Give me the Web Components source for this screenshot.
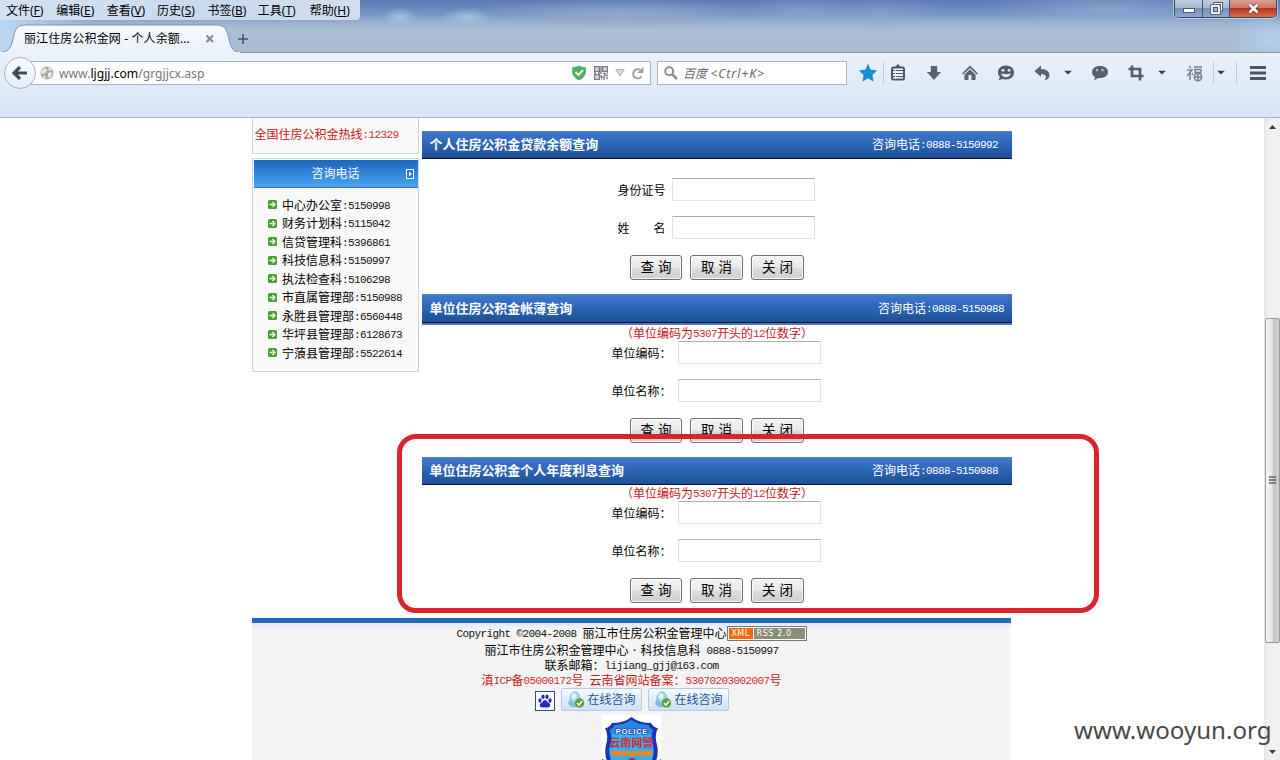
<!DOCTYPE html>
<html lang="zh-CN">
<head>
<meta charset="utf-8">
<title>丽江住房公积金网 - 个人余额查询</title>
<style>
html,body{margin:0;height:760px;overflow:hidden;background:#fff}
body{font:12px/16px "Noto Sans","Noto Sans CJK SC",sans-serif;color:#000}
</style>
</head>
<body>
<app-window></app-window>
<script>
const SONG = `"Liberation Mono","Noto Sans CJK SC",monospace`;
/* Half-width characters take exactly half of a 12px full-width cell. */
const song = s => s.replace(/[\x20-\x7e©]+/g, m => `<i>${m}</i>`);
const songCss = `i{font:normal 11px/1 ${SONG};letter-spacing:-.6px;white-space:pre;vertical-align:1px;opacity:.92}`;
function define(name, render){
  customElements.define(name, class extends HTMLElement{
    constructor(){
      super();
      this.attachShadow({mode:'open'});
    }
    connectedCallback(){
      this.shadowRoot.innerHTML = '<style>*{box-sizing:border-box}</style>' + render(this);
    }
  });
}

define('menu-bar', () => `
<style>
:host{display:flex;width:360px;height:20px;padding-left:6px;background:linear-gradient(90deg,#d3e1f3,#c9d9ee 60%,#d2deef);border-radius:0 0 4px 0;font-size:12px;line-height:21px;box-sizing:border-box}
span{width:51.1px;white-space:nowrap}span:last-child{margin-left:1.500px}u{text-underline-offset:1px}
</style>
${[['文件','F'],['编辑','E'],['查看','V'],['历史','S'],['书签','B'],['工具','T'],['帮助','H']].map(([a,b])=>`<span>${a}(<u>${b}</u>)</span>`).join('')}`);

define('window-buttons', () => `
<style>
:host{display:flex;width:103px;height:18px;margin-right:3px;border:1px solid #33445f;border-top:0;border-radius:0 0 5px 5px;overflow:hidden;box-shadow:0 0 0 1px rgba(220,232,248,.65);box-sizing:border-box}
b{display:flex;align-items:center;justify-content:center;height:17px;background:linear-gradient(#c1cee1 0,#a5b7d1 45%,#7890b4 50%,#91a9cc);border-right:1px solid #42516c}
.min{width:28px}.max{width:27px}.close{flex:1;border:0;background:linear-gradient(#dba198 0,#cd7568 45%,#ba3322 50%,#d66c4c)}
</style>
<b class="min"><svg width="12" height="9"><rect x=".5" y="4.500" width="11" height="4" fill="#fff" stroke="#4a5770"/></svg></b>
<b class="max"><svg width="13" height="13"><path d="M5 3.500V1.500h6.500v6.500H9.500" fill="none" stroke="#4a5770" stroke-width="3"/><path d="M5 3.500V1.500h6.500v6.500H9.500" fill="none" stroke="#fff" stroke-width="1.200"/><rect x="2" y="4" width="7" height="7" fill="#4a5770" stroke="#4a5770" stroke-width="3.400"/><rect x="2" y="4" width="7" height="7" fill="#4a5770" stroke="#fff" stroke-width="1.800"/><rect x="4" y="6" width="3" height="3" fill="#a5b7d1"/></svg></b>
<b class="close"><svg width="13" height="11" viewBox="0 0 13 11"><path d="M2.500 1.500l8 8M10.500 1.500l-8 8" stroke="#6b3035" stroke-width="4.200"/><path d="M2.500 1.500l8 8M10.500 1.500l-8 8" stroke="#fff" stroke-width="2.600"/></svg></b>`);

define('tab-strip', () => `
<style>
:host{display:grid;grid-template-columns:236px 1fr;height:29px}
.tab{display:grid;position:relative;height:29px}
.tab>svg,.row{grid-area:1/1}
.row{display:flex;align-items:center;padding:1px 0 0 24px;z-index:1;height:29px;white-space:nowrap}
.row span{width:181px;letter-spacing:.12px}
.new{padding:9px 0 0 1px}
</style>
<div class="tab"><svg width="240" height="29"><defs><linearGradient id="g" x2="0" y2="1"><stop stop-color="#f7fafe"/><stop offset="1" stop-color="#eaf1fa"/></linearGradient></defs><path d="M0 28.500C8 28 11 24 13 15C15 5 17 1 26 1H216C226 1 227 7 229 15C231 25 234 28 240 28.500" fill="url(#g)" stroke="#7e92ad"/><path d="M0 28.500h240" stroke="#eaf1fa" stroke-width="1"/></svg>
<div class="row"><span>丽江住房公积金网 - 个人余额...</span><svg width="10" height="10"><path d="M1.500 1.500l6.500 6.500M8 1.500L1.500 8" stroke="#858b94" stroke-width="2.200"/></svg></div></div>
<div class="new"><svg width="12" height="12"><path d="M6 1v10M1 6h10" stroke="#44536a" stroke-width="1.600"/></svg></div>`);

define('address-bar', () => `
<style>
:host{display:flex;align-items:center;width:651px;height:34px}
.back{flex:none;width:32px;height:32px;margin-left:4px;border:1px solid #a6b4c7;border-radius:50%;background:linear-gradient(#f8fbff,#e5eef9);display:grid;place-items:center;z-index:1}
.field{display:flex;align-items:center;flex:1;height:24px;margin-left:-5px;border:1px solid #a6b5c7;background:#fff;padding:0 5px 0 8px;color:#777}
.url{margin-left:5px;flex:1;font-size:12.150px;padding-top:1px}b{font-weight:400;color:#000}
.field svg{flex:none}
</style>
<div class="back"><svg width="16" height="14"><path d="M8 1L2 7l6 6M2.500 7H15" fill="none" stroke="#434d5a" stroke-width="3.200"/></svg></div>
<div class="field"><svg width="14" height="14"><circle cx="7" cy="7" r="6.500" fill="#a9a9a9"/><path d="M2 4l3-2 2 2-2 3-3 1-1-2zM8 7l3-1 1 2-2 4-2-1zM9 1l3 3-2 1-2-2zM4 9l2 2-1 2-2-2z" fill="#e9e9e9"/></svg>
<span class="url">www.<b>ljgjj.com</b>/grgjjcx.asp</span>
<svg width="14" height="16" style="margin-right:8px"><path d="M.5 2.500Q4 2.500 7 1Q10 2.500 13.500 2.500V7Q13 12.500 7 15Q1 12.500 .5 7z" fill="#41b16b" stroke="#6db588"/><path d="M3.500 7l3 3L11 5" fill="none" stroke="#fff9b8" stroke-width="2"/></svg>
<svg width="14" height="14" style="margin-right:7px" fill="none" stroke="#777b83" stroke-width="1.400"><rect x=".7" y=".7" width="4.600" height="4.600"/><rect x="8.700" y=".7" width="4.600" height="4.600"/><rect x=".7" y="8.700" width="4.600" height="4.600"/><path d="M2.500 3h1M10.500 3h1M2.500 11h1M7 0v7H4M0 7h2M9 7.500h2v2h3M7 9v2h3v3M12 12h2M7 13h1M12.500 7h1.500"/></svg>
<svg width="10" height="8" style="margin-right:6px"><path d="M.7.7h8.600L5 7z" fill="#dedede" stroke="#acacac"/></svg>
<svg width="14" height="13"><path d="M10.500 9.500A4.600 4.600 0 1 1 9.500 3" fill="none" stroke="#989ca2" stroke-width="2"/><path d="M12.500 0v6H6.500z" fill="#989ca2"/></svg></div>`);

define('search-box', () => `
<style>
:host{display:flex;align-items:center;width:190px;height:24px;margin-left:6px;border:1px solid #a6b5c7;background:#fff;color:#6b6b6b;font-style:italic;padding-left:6px;box-sizing:border-box}
span{margin-left:5px;padding-top:1px}em{font-size:12.500px;letter-spacing:.85px}
</style><svg width="14" height="14"><circle cx="5.200" cy="5.200" r="4" fill="none" stroke="#8d8d8d" stroke-width="1.900"/><path d="M8.300 8.300l4.700 4.700" stroke="#8d8d8d" stroke-width="2.600"/></svg><span>百度 <em>&lt;Ctrl+K&gt;</em></span>`);

const ICONS = {
 star:[20,'<path d="M10 1.500l2.500 5.600 6 .7-4.500 4.100 1.200 6L10 15l-5.200 2.900 1.200-6L1.500 7.800l6-.7z" fill="#1791d6" stroke="#1478b5" stroke-width=".6"/>'],
 list:[20,'<path d="M10 1l3 3H7z" fill="#4d5868"/><rect x="4" y="4.500" width="12" height="12" rx="1.500" fill="#e8f0f9" stroke="#4d5868" stroke-width="2"/><path d="M5 7.500h10M5 10.500h10M5 13.500h10" stroke="#4d5868" stroke-width="1.200"/><path d="M7.500 6v10" stroke="#e8f0f9" stroke-width=".8"/>'],
 down:[20,'<path d="M6.800 3h6.400v6h4L10 17 2.800 9h4z" fill="#59636f"/>'],
 home:[20,'<path d="M2.500 11L10 3.800l7.500 7.200" fill="none" stroke="#59636f" stroke-width="1.700"/><path d="M4.500 11.500L10 6.500l5.500 5V17H11.500v-5h-3v5h-4z" fill="#59636f"/>'],
 smile:[20,'<path d="M10 2.500c5 0 8 3 8 7s-3 7-8 7c-1 0-2 0-3-.5L2.500 17l1.500-3c-1.500-1-2-3-2-4.500 0-4 3-7 8-7z" fill="#535e6c"/><circle cx="7" cy="7.300" r="1.400" fill="#e6eef8"/><circle cx="13" cy="7.300" r="1.400" fill="#e6eef8"/><path d="M5 10.500q5 1.500 10 0q-1.500 3.700-5 3.700t-5-3.700z" fill="#e6eef8"/>'],
 undo:[20,'<path d="M2.500 8L9 2.500V6c6 0 8.500 3.500 8.500 6 0 3-2.500 5-5 5.300 3-3.500 1-6.300-3.500-6.300v3z" fill="#59636f"/>'],
 chat:[20,'<path d="M10 3c5 0 8 2.500 8 6s-3 6-8 6H8.500L4 17.500l1-3.300C3 13.200 2 11 2 9c0-3.500 3-6 8-6z" fill="#59636f"/><circle cx="7" cy="7" r="1.200" fill="#b9c2cd"/><circle cx="12.500" cy="7" r="1.200" fill="#b9c2cd"/>'],
 crop:[20,'<path d="M6 2.500V13h11.500M2.500 6H14v11.500" fill="none" stroke="#535e6c" stroke-width="2.700"/>'],
 fu:[20,'<g fill="none" stroke="#7b828b" stroke-width="1.500"><path d="M5 3l2 2M3 7h5L3 13M6 9v8M8 10l1 2M10 4h8M11 6.500h6v3h-6z"/><circle cx="14" cy="14" r="3.700"/><path d="M14 10v8M10 14h8"/></g>'],
 caret:[12,'<path d="M2.200 7.800h7.600L6 11.500z" fill="#333f4e"/>'],
 menu:[20,'<path d="M2 4.500h16M2 10h16M2 15.500h16" stroke="#4b5665" stroke-width="2.800"/>']
};
define('tool-icon', el => {
  const [w,d] = ICONS[el.getAttribute('name')];
  return `<style>:host{display:block;flex:none;height:20px}svg{display:block}</style><svg width="${w}" height="20" viewBox="0 0 ${w} 20">${d}</svg>`;
});

define('browser-chrome', () => `
<style>
:host{display:block;height:118px}
.title{height:53px;background:
 radial-gradient(ellipse 18px 9px at 400px 17px,rgba(170,208,226,.75),transparent),
 radial-gradient(ellipse 26px 9px at 467px 17px,rgba(170,208,226,.75),transparent),
 radial-gradient(ellipse 150px 16px at 620px 14px,rgba(145,170,200,.9),transparent),
 radial-gradient(ellipse 60px 18px at 800px 12px,rgba(140,170,212,.6),transparent),
 radial-gradient(ellipse 70px 20px at 880px 14px,rgba(140,170,212,.5),transparent),
 radial-gradient(ellipse 130px 20px at 1110px 8px,rgba(150,178,215,.6),transparent),
 radial-gradient(ellipse 40px 26px at 1270px 40px,rgba(178,210,240,.8),transparent),
 linear-gradient(90deg,#b9d6f5 0,rgba(185,214,245,0) 90px),
 linear-gradient(#5a7ab4 0,#7595c3 14px,#9cb3d0 23px,#abbfd6 30px,#a9bcd3 100%)}
.top{display:flex;justify-content:space-between;height:24px}
.bar{display:flex;height:65px;padding-top:2px;background:linear-gradient(#eaf1fa,#d8e7f7 60px);border-bottom:1px solid #a3b4ca;border-top:1px solid #cfdbe9}
tab-strip{position:relative}
.bar>div{display:flex;align-items:center;height:34px}
hr{width:1px;height:22px;border:0;margin:0;background:#c0cddc}
.title{border-bottom:1px solid #7f90a8}
.bar{border-top:0;padding-top:3px}
tab-strip{height:29px}
</style>
<div class="title"><div class="top"><menu-bar></menu-bar><window-buttons></window-buttons></div><tab-strip></tab-strip></div>
<div class="bar"><div><address-bar></address-bar><search-box></search-box>
${[['star',11],['|',5],['list',4],['down',16],['home',16],['smile',16],['undo',16],['caret',10],['chat',16],['crop',16],['caret',10],['fu',16],['|',9],['caret',1],['|',9],['menu',11]].map(([n,g])=>n=='|'?`<hr style="margin-left:${g}px">`:`<tool-icon name="${n}" style="margin-left:${g}px"></tool-icon>`).join('')}
</div></div>`);

define('scroll-bar', () => `
<style>
:host{display:flex;flex-direction:column;align-items:center;width:16px;height:642px;background:linear-gradient(90deg,#e5e5e5,#f1f1f1 30%,#efefef)}
.a{height:17px;display:grid;place-items:center}
.thumb{width:15px;height:325px;margin-top:183px;border:1px solid #989898;border-radius:2px;background:linear-gradient(90deg,#f6f6f6,#e6e6e8 45%,#c6c6ca 60%,#d2d2d6);display:grid;place-items:center}
.end{margin-top:auto}
</style>
<div class="a"><svg width="7" height="4"><path d="M0 4h7L3.500 0z" fill="#3c3c3c"/></svg></div>
<div class="thumb"><svg width="7" height="9"><path d="M0 1h7M0 4h7M0 7h7" stroke="#626262" stroke-width="1.500"/></svg></div>
<div class="a end"><svg width="7" height="4"><path d="M0 0h7L3.500 4z" fill="#3c3c3c"/></svg></div>`);

const PHONES = ['中心办公室:5150998','财务计划科:5115042','信贷管理科:5396861','科技信息科:5150997','执法检查科:5106298','市直属管理部:5150988','永胜县管理部:6560448','华坪县管理部:6128673','宁蒗县管理部:5522614'];
define('side-panel', () => `
<style>${songCss}
:host{display:flex;flex-direction:column;gap:4px;width:167px}
.hot{height:36px;border:1px solid #c6d9ea;border-top:0;background:#f9f9fa;color:#c8171e;padding:9px 0 0 1.500px;line-height:16px;white-space:nowrap}
.box{height:214px;border:1px solid #c6d9ea;background:#f9f9fa;padding:1px 0 0 1px}
.h{display:grid;grid-template-columns:1fr 9px;align-items:center;height:28px;padding:1px 3px 0 11px;border-bottom:1px solid #3a6fb8;background:linear-gradient(#1c68bb,#3185d8 50%,#4ba3f0);color:#fff;text-align:center}
ul{list-style:none;margin:0;padding:8px 0 0 14px}li{display:flex;align-items:center;height:18.500px;white-space:nowrap}
li svg{margin:-1px 5px 0 0}li span{padding-top:1px}
</style>
<div class="hot">${song('全国住房公积金热线:12329')}</div>
<div class="box"><div class="h"><span>咨询电话</span><svg width="9" height="10"><rect x=".5" y=".5" width="7" height="9" fill="#2878cc" stroke="#fff"/><path d="M3 2.500v5L6 5z" fill="#fff"/></svg></div>
<ul>${PHONES.map(p=>`<li><svg width="9" height="9"><rect width="9" height="9" rx="1.500" fill="#4a9f32"/><path d="M1.500 4.500h5M4.500 2l2.500 2.500L4.500 7" fill="none" stroke="#e8ffe0" stroke-width="1.300"/></svg><span>${song(p)}</span></li>`).join('')}</ul></div>`);

define('push-button', () => `
<style>
:host{display:flex;align-items:center;justify-content:center;height:25px;border:1px solid #707070;border-radius:3px;background:linear-gradient(#f3f3f3,#ebebeb 48%,#dcdcdc 52%,#cfcfcf);box-shadow:inset 0 0 0 1px rgba(255,255,255,.8);box-sizing:border-box;font-size:13.500px;word-spacing:-4px;padding-top:3px;white-space:pre}
</style><slot></slot>`);

define('query-form', el => {
  const a = n => el.getAttribute(n);
  return `
<style>${songCss}
:host{display:block;width:590px}
header{display:flex;justify-content:space-between;align-items:center;height:28px;padding:1px ${a('pad')||14}px 0 8px;color:#fff;background:linear-gradient(#3e78cd,#2f68b9 40%,#1d5096);border-top:1px solid #5584bd;border-bottom:1px solid #06152f}
header b{font-size:12.980px;margin-left:-.5px}
header i{opacity:1}
:host([tall]) header{height:29px;padding-top:2px}
.strip{height:2px;background:#4b7cb8}
.hint{height:15px;line-height:18px;margin-top:1px;color:#c8171e;text-align:center;white-space:nowrap}
.row{display:flex;align-items:center;height:23px;margin:0 0 15px var(--x)}
label{width:var(--w);white-space:pre;padding-top:5px;margin-left:-.5px;margin-right:.5px}
input{width:143px;height:23px;margin:0;border:1px solid #e1e3e8;border-top-color:#abadb3;border-radius:1px;background:#fff}
.btns{display:flex;gap:8px;margin:16px 0 0 208px}
.btns push-button:first-child{width:52px}.btns push-button{width:53px}
.row:last-child{margin-bottom:0}
</style>
<header><b>${a('heading')}</b><span>${song('咨询电话:'+a('tel'))}</span></header>
${el.hasAttribute('tall')?'<div class="strip"></div>':''}
${el.hasAttribute('hint')?`<div class="hint">${song(a('hint'))}</div>`:'<div style="height:19px"></div>'}
<div style="--x:${a('x')}px;--w:${a('w')}px">${a('fields').split(',').map(f=>`<div class="row"><label>${f}</label><input></div>`).join('')}</div>
<div class="btns"><push-button>查 询</push-button><push-button>取 消</push-button><push-button>关 闭</push-button></div>`;
});

define('consult-button', () => `
<style>:host{display:flex;align-items:center;width:81px;height:23px;box-sizing:border-box;border:1px solid #b3c9e4;border-radius:2px;background:linear-gradient(#f8fbff,#dce9f9 60%,#cfe0f6);padding-left:5px;color:#1b5799}span{margin-left:3px;padding-top:1px}</style>
<svg width="18" height="18"><ellipse cx="8" cy="8" rx="5" ry="7" fill="#a6d8ef" stroke="#5ea9ce" stroke-width=".8"/><path d="M3 9Q0 12 2 14Q5 17 9 16L8 12z" fill="#79bfdf"/><ellipse cx="7" cy="5" rx="2.500" ry="3" fill="#def3fc"/><circle cx="12.500" cy="12" r="4.700" fill="#57a430"/><path d="M10 12l2 2 3.200-4" fill="none" stroke="#fff" stroke-width="1.600"/></svg><span>在线咨询</span>`);

define('site-footer', () => `
<style>${songCss}
:host{display:flex;flex-direction:column;align-items:center;width:759px;height:142px;overflow:hidden;border-top:5px solid #2767b7;background:linear-gradient(#d9e9fa,#f4f4f4 6px);white-space:nowrap;box-sizing:border-box}
div{display:flex;align-items:center;flex:none}
div>span:not([class]){padding-top:1px}
.xml{display:flex;width:80px;height:15px;border:1px solid #77776c;padding:1px;background:#fff;color:#fff;font:8px/11px "DejaVu Sans",sans-serif}
.xml b{font-weight:400;width:24px;background:#f26a0c;text-align:center;margin-right:1px;letter-spacing:.4px}.xml em{font-style:normal;flex:1;background:#898e79;padding-left:3px;letter-spacing:.6px}
.paw{width:20px;height:20px;border:1px solid #2c4c95;background:#fff;display:grid;place-items:center;margin-top:3px}
.badge{width:59px;height:48px;flex:none;background:#fff;margin-top:4px;display:block}
</style>
<div style="height:19px;margin-top:1px"><span>${song('Copyright ©2004-2008 丽江市住房公积金管理中心')}</span><span class="xml"><b>XML</b><em>RSS 2.0</em></span></div>
<div style="height:15px"><span>${song('丽江市住房公积金管理中心')}<span style="display:inline-block;width:12px;text-align:center">·</span>${song('科技信息科 0888-5150997')}</span></div>
<div style="height:15px"><span>${song('联系邮箱：lijiang_gjj@163.com')}</span></div>
<div style="height:15px;color:#c8171e"><span>${song('滇ICP备05000172号 云南省网站备案：53070203002007号')}</span></div>
<div style="height:23px;gap:6px"><span class="paw"><svg width="14" height="14" fill="#2525c9"><ellipse cx="2" cy="6.500" rx="1.600" ry="2.200"/><ellipse cx="5" cy="2.800" rx="1.600" ry="2.300"/><ellipse cx="9" cy="2.800" rx="1.600" ry="2.300"/><ellipse cx="12" cy="6.500" rx="1.600" ry="2.200"/><path d="M7 6q2 0 3 2.500Q13 10 12 12q-1 2-3 1.500-2-.5-4 0Q3 14 2 12q-1-2 2-3.500Q5 6 7 6z"/></svg></span><consult-button></consult-button><consult-button></consult-button></div>
<svg class="badge" viewBox="0 0 59 48"><path d="M3 13Q7 13 10 8Q22 8 29.500 2Q37 8 49 8Q52 13 56 13Q52 20 55 30Q57 38 54 46L60 44V50H0V44L5 46Q2 38 4 30Q7 20 3 13z" fill="#1a35b5"/><path d="M8 15Q11 14 13 10Q24 10 29.500 5Q35 10 46 10Q48 14 51 15Q48 22 51 31Q53 38 49 48H10Q6 38 8 31Q11 22 8 15z" fill="#35b0ea"/><path d="M8 15Q11 14 13 10Q24 10 29.500 5Q35 10 46 10Q48 14 51 15L50 19Q30 17 9 19z" fill="#2a86dd"/><path d="M9 36h41v5H9z" fill="#e08a2f"/><circle cx="30" cy="48" r="5" fill="#a02c50"/><text x="29.800" y="18.500" text-anchor="middle" font-family="Liberation Sans" font-weight="700" font-size="7.500" letter-spacing=".7" fill="#fff" stroke="#1a35b5" stroke-width="1.200" paint-order="stroke">POLICE</text><text x="29.500" y="32" text-anchor="middle" font-family="Noto Sans CJK SC" font-weight="700" font-size="11" fill="#d6293f">云南网警</text></svg>`);

define('app-window', () => `
<style>
:host{display:block;position:relative;width:1280px;height:760px;overflow:hidden;background:#fff}
.view{display:grid;grid-template-columns:1264px 16px;height:642px;overflow:hidden}
main{padding-left:252px}
.cols{display:grid;grid-template-columns:167px 590px;gap:3px;height:500px}
.forms{font-family:${SONG.replace(/"/g,"'")};padding-top:13px}
query-form+query-form{margin-top:14px}
.mark{position:absolute;left:397px;top:434px;width:702px;height:179px;box-sizing:border-box;border:5px solid #db232c;border-radius:19px}
.wm{position:absolute;left:1074px;top:713px;font:24.100px/34px "Noto Sans",sans-serif;color:#484848;white-space:nowrap}
</style>
<browser-chrome></browser-chrome>
<div class="view"><main><div class="cols"><side-panel></side-panel><div class="forms">
<query-form heading="个人住房公积金贷款余额查询" tel="0888-5150992" fields="身份证号,姓　　名" x="196" w="54"></query-form>
<query-form tall pad="8" heading="单位住房公积金帐薄查询" tel="0888-5150988" hint="（单位编码为5307开头的12位数字）" fields="单位编码：,单位名称：" x="190" w="66"></query-form>
<query-form heading="单位住房公积金个人年度利息查询" tel="0888-5150988" hint="（单位编码为5307开头的12位数字）" fields="单位编码：,单位名称：" x="190" w="66"></query-form>
</div></div><site-footer></site-footer></main><scroll-bar></scroll-bar></div>
<div class="mark"></div><div class="wm">www.wooyun.org</div>`);
</script>
</body>
</html>
